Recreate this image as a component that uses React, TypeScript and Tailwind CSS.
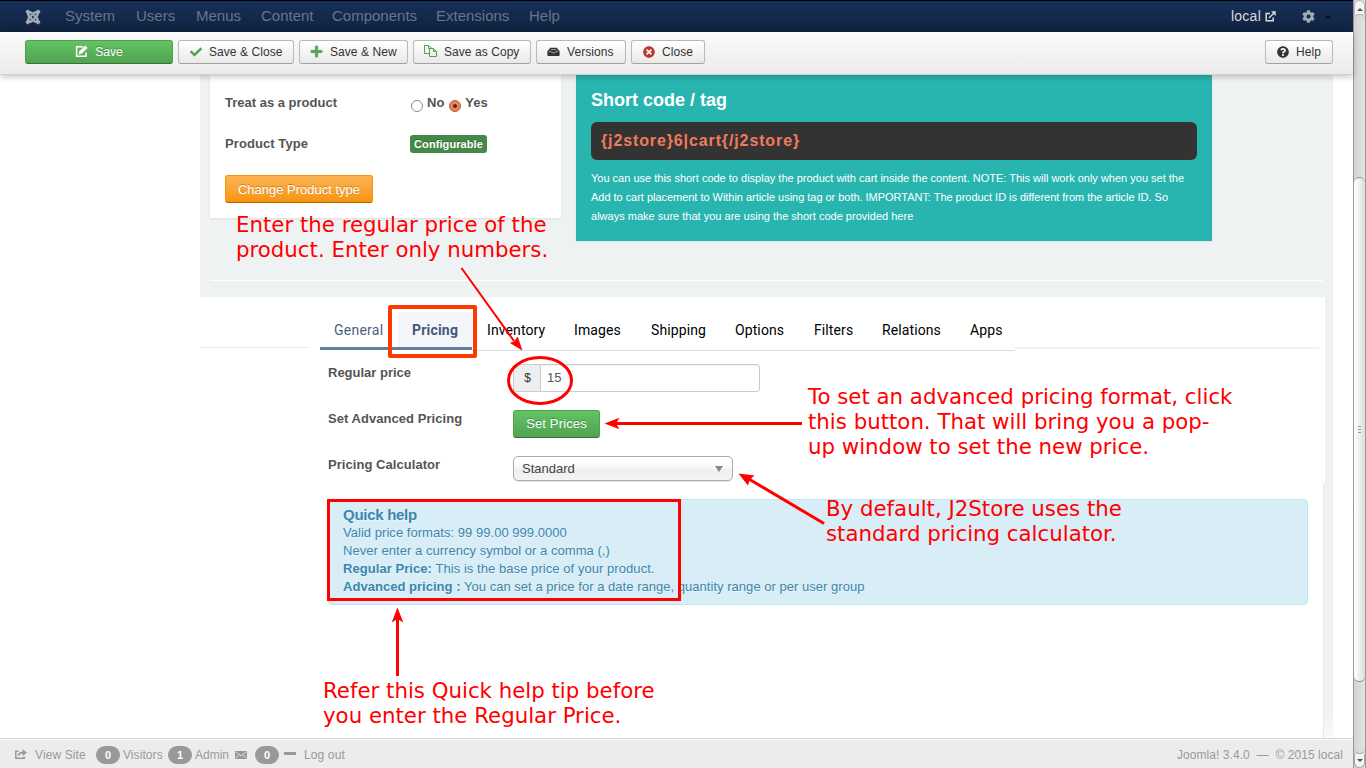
import React from 'react';
import { FaJoomla, FaCog, FaCheck, FaPlus, FaTimesCircle, FaQuestionCircle } from 'react-icons/fa';

const sans = "font-['Liberation_Sans',Arial,sans-serif]";

const EditIcon = () => (
  <svg width="13" height="13" viewBox="0 0 13 13" fill="none" stroke="currentColor">
    <path d="M8 1.7H1.6V11.3H11V7.5" strokeWidth="1.5" />
    <path d="M3.600 9.400L4.400 6.200L10.200 .6L12.600 2.900L6.800 8.600Z" fill="currentColor" stroke="none" />
  </svg>
);

const CopyIcon = () => (
  <svg width="13" height="13" viewBox="0 0 13 13" fill="none" stroke="#51a351" strokeWidth="1">
    <path d="M5.5 8.5H.5V.5H5L7.5 3V4" />
    <path d="M4.5 .5V3.5H7.5" />
    <path d="M5.500 3.500H9.500L12.500 6.500V11.500H5.500Z" />
    <path d="M9.500 3.500V6.500H12.500" />
  </svg>
);

const DrawerIcon = () => (
  <svg width="13" height="10" viewBox="0 0 13 10" fill="#333">
    <path d="M3.300 .8H9.700L12.600 4.200V8Q12.600 9 11.600 9H1.400Q.4 9 .4 8V4.200Z" />
    <path d="M3.600 2.600H9.400M1.800 4.600H4L4.800 5.800H8.200L9 4.600H11.200" fill="none" stroke="#bbb" strokeWidth=".8" />
  </svg>
);

const ExternalIcon = () => (
  <svg width="11" height="11" viewBox="0 0 11 11" fill="none" stroke="#d9d9d9" strokeWidth="1.5">
    <path d="M5 2.500H1.200V9.800H8.200V6.500" />
    <path d="M4 7L9 2" />
    <path d="M6 .3H10.700V5Z" fill="#d9d9d9" stroke="none" />
  </svg>
);

const ShareIcon = () => (
  <svg width="12" height="11" viewBox="0 0 12 11" fill="none" stroke="#999" strokeWidth="1.500">
    <path d="M3.500 2.200H.8V9.300H9.200V7.500" />
    <path d="M3.500 6.500Q4 3.600 8 3.600" strokeWidth="1.900" />
    <path d="M7.500 .2L12 3.600L7.500 7Z" fill="#999" stroke="none" />
  </svg>
);

const MailIcon = () => (
  <svg width="12" height="8" viewBox="0 0 12 8">
    <rect width="12" height="8" fill="#999" />
    <path d="M.7 .8L6 4.800L11.300 .8M.7 7.300L4.300 3.600M11.300 7.300L7.700 3.600" fill="none" stroke="#ececec" strokeWidth=".8" />
  </svg>
);

function Tool({ w, icon, children }: { w: string; icon: React.ReactNode; children: React.ReactNode }) {
  return (
    <button
      className={`${w} flex h-6 shrink-0 items-center gap-[7px] rounded-[3px] border border-[#b9b9b9] border-b-[#a2a2a2] bg-linear-to-b from-white to-[#e9e9e9] pl-[10px] text-[12px] tracking-[0.06px] whitespace-nowrap text-[#333]`}
    >
      <span className="flex w-[13px] justify-center pb-px">{icon}</span>
      {children}
    </button>
  );
}

function Note({ pos, children }: { pos: string; children: React.ReactNode }) {
  return (
    <div className={`${pos} absolute font-['DejaVu_Sans',sans-serif] text-[21.3px] leading-[25px] whitespace-nowrap text-[#fe0000]`}>
      {children}
    </div>
  );
}

const nav = [
  ['System', 'w-[71px]'],
  ['Users', 'w-[60px]'],
  ['Menus', 'w-[65px]'],
  ['Content', 'w-[71px]'],
  ['Components', 'w-[104px]'],
  ['Extensions', 'w-[93px]'],
  ['Help', 'w-[60px]'],
];

const tabs = [
  ['Inventory', 'w-[87px]'],
  ['Images', 'w-[77px]'],
  ['Shipping', 'w-[84px]'],
  ['Options', 'w-[79px]'],
  ['Filters', 'w-[68px]'],
  ['Relations', 'w-[88px]'],
  ['Apps', 'w-[45px]'],
];

const Pill = ({ children }: { children: React.ReactNode }) => (
  <span className="flex h-[18px] w-6 items-center justify-center rounded-full bg-[#999] pt-px text-[11px] font-bold text-white">{children}</span>
);

export default function App() {
  return (
    <div className={`${sans} relative flex h-[768px] w-[1366px] overflow-hidden bg-white text-[13px] text-[#555]`}>
      <div className="flex w-[1353px] shrink-0 flex-col">
        <nav className="flex h-8 shrink-0 items-center border-t border-black bg-linear-to-b from-[#17305a] to-[#10223e] pl-[25px] text-[15px] text-[#68758b]">
          <FaJoomla className="mr-[24px] size-4 text-[#a9b1be]" stroke="currentColor" strokeWidth={14} />
          {nav.map(([t, w]) => (
            <span key={t} className={w}>{t}</span>
          ))}
          <span className="ml-auto text-[14px] tracking-[0.25px] text-[#d9d9d9]">local</span>
          <span className="ml-1"><ExternalIcon /></span>
          <FaCog className="ml-[26px] size-[13px] text-[#a3abb8]" />
          <span className="mt-[2px] mr-[22px] ml-[10px] border-x-[3px] border-t-[3px] border-x-transparent border-t-[#050b15]" />
        </nav>

        <div className="z-10 flex h-[43px] shrink-0 items-start gap-[5px] border-b border-[#d0d0d0] bg-linear-to-b from-[#fbfbfb] to-[#ebebeb] pt-2 pr-5 pl-[25px] shadow-[0_2px_6px_rgba(0,0,0,0.22)]">
          <button className="flex h-6 w-[148px] items-center justify-center gap-[7px] rounded-[3px] border border-[#4fa14f] border-b-[#387038] bg-linear-to-b from-[#62c462] to-[#51a351] text-[12px] text-white [text-shadow:0_-1px_0_rgba(0,0,0,0.25)]">
            <span className="pb-px"><EditIcon /></span> Save
          </button>
          <Tool w="w-[116px]" icon={<FaCheck size={12} color="#51a351" />}>Save &amp; Close</Tool>
          <Tool w="w-[109px]" icon={<FaPlus size={13} color="#51a351" stroke="#51a351" strokeWidth={24} />}>Save &amp; New</Tool>
          <Tool w="w-[118px]" icon={<CopyIcon />}>Save as Copy</Tool>
          <Tool w="w-[90px]" icon={<DrawerIcon />}>Versions</Tool>
          <Tool w="w-[74px]" icon={<FaTimesCircle size={12} color="#bd362f" />}>Close</Tool>
          <div className="ml-auto">
            <Tool w="w-[68px]" icon={<FaQuestionCircle size={12} color="#333" />}>Help</Tool>
          </div>
        </div>

        <main className="ml-[200px] flex w-[1133px] flex-1 flex-col bg-[#eef2f3]">
          <section className="flex h-[205px] items-start pl-[10px]">
            <div className="h-[143px] w-[351px] bg-white px-[15px] pt-5 font-bold shadow-[0_1px_2px_rgba(0,0,0,0.08)]">
              <div className="flex h-4 items-center">
                <span className="w-[186px]">Treat as a product</span>
                <span className="mt-[6px] size-3 rounded-full border border-[#8c8c8c] bg-white" />
                <span className="ml-1">No</span>
                <span className="mt-[6px] ml-[5px] flex size-3 items-center justify-center rounded-full border border-[#b55d43] bg-[#f08159]">
                  <span className="size-1 rounded-full bg-[#54281c]" />
                </span>
                <span className="ml-1">Yes</span>
              </div>
              <div className="mt-6 flex h-[18px] items-center">
                <span className="w-[185px] tracking-[0.08px]">Product Type</span>
                <span className="flex h-[18px] w-[77px] items-center justify-center rounded-[3px] bg-[#468847] text-[11px] tracking-[0.08px] text-white [text-shadow:0_-1px_0_rgba(0,0,0,0.25)]">Configurable</span>
              </div>
              <button className="mt-[22px] h-7 w-[148px] rounded-[3px] border border-[#f89406] border-b-[#ad6704] bg-linear-to-b from-[#fbb450] to-[#f89406] pt-px text-[13px] font-normal text-white [text-shadow:0_-1px_0_rgba(0,0,0,0.25)]">
                Change Product type
              </button>
            </div>
            <div className="ml-[15px] h-[166px] w-[636px] bg-[#28b5b0] px-[15px] pt-[13px] text-white shadow-[0_1px_2px_rgba(0,0,0,0.06)]">
              <h3 className="text-[18px] leading-6 font-bold">Short code / tag</h3>
              <div className="mt-[10px] flex h-[38px] items-center rounded-[6px] bg-[#333] pl-[10px] text-[16px] font-bold tracking-[0.88px] text-[#f07c5c]">
                {'{j2store}6|cart{/j2store}'}
              </div>
              <p className="mt-[9px] text-[11px] leading-[19px] whitespace-nowrap">
                You can use this short code to display the product with cart inside the content. NOTE: This will work only when you set the
                <br />
                <span className="tracking-[-0.03px]">Add to cart placement to Within article using tag or both. IMPORTANT: The product ID is different from the article ID. So</span>
                <br />
                <span className="tracking-[0.01px]">always make sure that you are using the short code provided here</span>
              </p>
            </div>
          </section>
          <div className="mr-[10px] mb-4 ml-[10px] h-px bg-white" />

          <section className="flex flex-1">
            <div className="flex w-[1125px] flex-col bg-white">
              <div className="flex h-[54px] items-start font-['Roboto',sans-serif] text-[14px] tracking-[0.1px]">
                <div className="mt-[50px] mr-[11px] h-px w-[109px] bg-[#eaeeef]" />
                <div className="mt-[15px] flex h-[38px] border-b-[3px] border-[#6280a3] leading-9">
                  <span className="w-[78px] pl-[14px] tracking-[0.25px] text-[#4f6080]">General</span>
                  <span className="w-[74px] bg-[#f3f6fa] pl-[14px] font-bold tracking-[0.2px] text-[#43587c]">Pricing</span>
                </div>
                <div className="mt-[15px] flex h-[39px] border-b border-[#dcdfe1] pl-[15px] leading-9 text-black">
                  {tabs.map(([t, w]) => (
                    <span key={t} className={w}>{t}</span>
                  ))}
                </div>
                <div className="mt-[50px] h-[2px] w-[304px] bg-[#eef2f3]" />
              </div>

              <div className="flex flex-1 flex-col pt-[13px] pl-[128px]">
                <div className="flex h-[46px] items-start">
                  <label className="w-[185px] leading-[18px] font-bold">Regular price</label>
                  <div className="flex h-7 w-[247px] overflow-hidden rounded-[3px] border border-[#ccc] leading-[26px] shadow-[inset_0_1px_1px_rgba(0,0,0,0.06)]">
                    <span className="w-[27px] border-r border-[#ccc] bg-[#eee] pl-px text-center text-[12px] text-[#333]">$</span>
                    <span className="pl-[6px]">15</span>
                  </div>
                </div>
                <div className="flex h-[46px] items-start">
                  <label className="w-[185px] leading-[18px] font-bold tracking-[0.05px]">Set Advanced Pricing</label>
                  <button className="h-7 w-[87px] rounded-[3px] border border-[#4fa14f] border-b-[#387038] bg-linear-to-b from-[#62c462] to-[#51a351] tracking-[0.15px] text-white [text-shadow:0_-1px_0_rgba(0,0,0,0.25)]">
                    Set Prices
                  </button>
                </div>
                <div className="flex h-[43px] items-start">
                  <label className="w-[185px] leading-[18px] font-bold tracking-[0.05px]">Pricing Calculator</label>
                  <div className="flex h-[25px] w-[220px] items-center justify-between rounded-[5px] border border-[#aaa] bg-[linear-gradient(#fff_20%,#f6f6f6_50%,#eee_52%,#f4f4f4)] pr-[9px] pl-2 text-[#444] shadow-[0_1px_1px_rgba(0,0,0,0.1)]">
                    Standard
                    <span className="border-x-[4px] border-t-[6px] border-x-transparent border-t-[#888]" />
                  </div>
                </div>
                <div className="h-[106px] w-[980px] rounded-[4px] border border-[#bce8f1] bg-[#d9edf7] pt-[6px] pl-[14px] leading-[18px] tracking-[0.04px] text-[#3a87ad] [text-shadow:0_1px_0_rgba(255,255,255,0.5)]">
                  <div className="text-[15px] font-bold tracking-[-0.28px]">Quick help</div>
                  <div>Valid price formats: 99 99.00 999.0000</div>
                  <div>Never enter a currency symbol or a comma (,)</div>
                  <div className="tracking-[0.06px]"><b>Regular Price:</b> This is the base price of your product.</div>
                  <div className="tracking-[0.03px]"><b>Advanced pricing :</b> You can set a price for a date range, quantity range or per user group</div>
                </div>
              </div>
            </div>
            <div className="mt-[186px] -ml-[2px] w-[10px] border-l border-[#e6eaeb] bg-linear-to-b from-[#eef2f3] from-90% to-[#fafbfb]" />
          </section>
        </main>

        <footer className="flex h-[30px] shrink-0 items-center border-t border-[#d4d4d4] bg-[#ececec] pt-[2px] pr-[10px] pl-[15px] text-[12px] text-[#999] shadow-[inset_0_1px_0_#fafafa]">
          <span className="pb-px"><ShareIcon /></span>
          <span className="ml-2 w-[61px] tracking-[0.1px]">View Site</span>
          <Pill>0</Pill>
          <span className="ml-[3px] w-[45px] tracking-[0.08px]">Visitors</span>
          <Pill>1</Pill>
          <span className="ml-[3px] w-[40px]">Admin</span>
          <span><MailIcon /></span>
          <span className="ml-2"><Pill>0</Pill></span>
          <span className="mb-[2px] ml-[5px] h-[3px] w-3 bg-[#999]" />
          <span className="ml-2 tracking-[0.12px]">Log out</span>
          <span className="ml-auto tracking-[0.06px] whitespace-pre">Joomla! 3.4.0  —  © 2015 local</span>
        </footer>
      </div>

      <aside className="flex w-[13px] shrink-0 flex-col items-center border-x border-[#9a9893] bg-linear-to-r from-[#d6d4d2] to-[#e4e3e1]">
        <div className="flex h-[14px] w-full shrink-0 items-center justify-center rounded-t-full border border-b-0 border-[#bbb] bg-[#f5f4f2]">
          <span className="mt-[3px] border-x-[3px] border-b-[3px] border-x-transparent border-b-[#555]" />
        </div>
        <div className="h-[163px] w-full shrink-0 rounded-t-full border-t border-[#aaa]" />
        <div className="flex h-[505px] w-full shrink-0 flex-col items-center justify-center gap-[2px] rounded-full border-y border-[#8e8c88] bg-linear-to-r from-white to-[#dedddb]">
          <span className="h-px w-[3px] bg-[#999]" />
          <span className="h-px w-[3px] bg-[#999]" />
          <span className="h-px w-[3px] bg-[#999]" />
        </div>
        <div className="w-full flex-1 rounded-b-full border-b border-[#aaa]" />
        <div className="flex h-[14px] w-full shrink-0 items-center justify-center rounded-b-full border border-t-0 border-[#aaa] bg-[#f5f4f2]">
          <span className="border-x-[3px] border-t-[3px] border-x-transparent border-t-[#555]" />
        </div>
      </aside>

      <div className="pointer-events-none absolute inset-0 z-20">
        <svg className="absolute inset-0" width="1366" height="768" fill="none" stroke="#fe0000">
          <rect x="390" y="307" width="85" height="49" stroke="#ff3a00" strokeWidth="4" strokeLinejoin="round" />
          <rect x="328.5" y="500.5" width="351" height="99" strokeWidth="3" />
          <ellipse cx="540" cy="380.500" rx="31.500" ry="23" strokeWidth="3" />
          <path d="M461.500 268L514 341" strokeWidth="2" />
          <path d="M522 350L510.500 343L514.500 341.500L517.500 337Z" fill="#fe0000" stroke="#fe0000" strokeWidth=".6" />
          <path d="M802 423.500H614" strokeWidth="3" />
          <path d="M604.500 423.500L619.500 417.700L616 423.500L619.500 429.300Z" fill="#fe0000" stroke="none" />
          <path d="M824 523.500L748 478.500" strokeWidth="3" />
          <path d="M738.500 473.500L754.500 475.500L749.500 480L748 485.500Z" fill="#fe0000" stroke="none" />
          <path d="M397.500 676V617" strokeWidth="3" />
          <path d="M397.500 607.500L403.300 622.500L397.500 619L391.700 622.500Z" fill="#fe0000" stroke="none" />
        </svg>
        <Note pos="top-[212px] left-[236px]">Enter the regular price of the<br />product. Enter only numbers.</Note>
        <Note pos="top-[384px] left-[808px]">To set an advanced pricing format, click<br />this button. That will bring you a pop-<br />up window to set the new price.</Note>
        <Note pos="top-[496px] left-[826px]">By default, J2Store uses the<br />standard pricing calculator.</Note>
        <Note pos="top-[678px] left-[323px]">Refer this Quick help tip before<br />you enter the Regular Price.</Note>
      </div>
    </div>
  );
}
